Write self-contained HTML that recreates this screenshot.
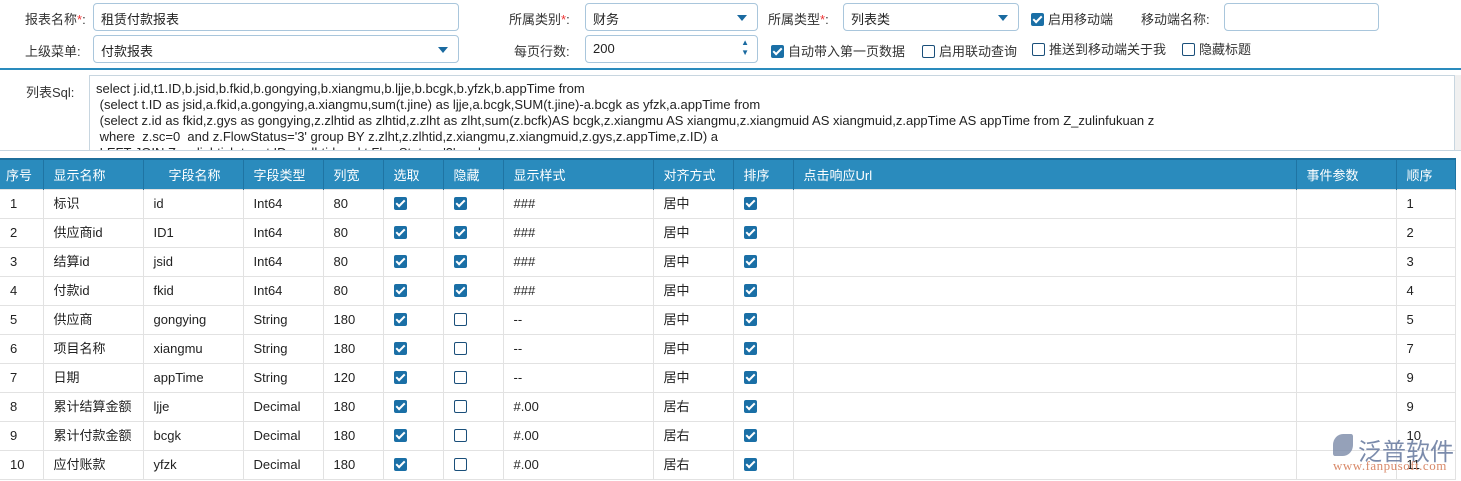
<!DOCTYPE html>
<html><head><meta charset="utf-8"><style>
*{box-sizing:border-box;margin:0;padding:0}
body{width:1461px;height:481px;overflow:hidden;background:#fff;font-family:"Liberation Sans","Noto Sans CJK SC",sans-serif;font-size:13px;color:#333;position:relative}
.a{position:absolute;white-space:nowrap}
.inp{position:absolute;border:1px solid #a9c6dc;border-radius:4px;background:#fff;height:28px;padding:5px 7px;font-size:13px;color:#222}
.red{color:#e33}
.dd::after{content:"";position:absolute;right:10px;top:11px;border-left:5px solid transparent;border-right:5px solid transparent;border-top:6px solid #1a6aa0}
.cb{display:inline-block;width:13px;height:13px;border-radius:2px;vertical-align:-2px;margin-right:4px}
.on{background:#1a6fa6;position:relative}
.on::after{content:"";position:absolute;left:4px;top:1px;width:3px;height:7px;border:solid #fff;border-width:0 2px 2px 0;transform:rotate(45deg)}
.off{border:1.5px solid #1a4f7a;background:#fff}
table{position:absolute;left:0;top:158px;border-collapse:collapse;width:1455px;table-layout:fixed}
th{background:#2a8bbd;color:#fff;font-weight:normal;text-align:left;height:30px;padding-left:10px;border-right:1px solid #1f74a3;border-top:2px solid #1d6f9c;font-size:13px}
td{height:29px;border:1px solid #e2e2e2;padding-left:10px;font-size:13px;color:#222;line-height:14px}
td:first-child{border-left:none}
td .cb{margin:0}
</style></head><body>
<div class="a" style="left:25px;top:9px">报表名称<span class="red">*</span>:</div>
<div class="inp" style="left:93px;top:3px;width:366px">租赁付款报表</div>
<div class="a" style="left:509px;top:9px">所属类别<span class="red">*</span>:</div>
<div class="inp dd" style="left:585px;top:3px;width:173px">财务</div>
<div class="a" style="left:768px;top:9px">所属类型<span class="red">*</span>:</div>
<div class="inp dd" style="left:843px;top:3px;width:176px">列表类</div>
<div class="a" style="left:1031px;top:9px"><span class="cb on"></span>启用移动端</div>
<div class="a" style="left:1141px;top:9px">移动端名称:</div>
<div class="inp" style="left:1224px;top:3px;width:155px"></div>
<div class="a" style="left:25px;top:41px">上级菜单:</div>
<div class="inp dd" style="left:93px;top:35px;width:366px">付款报表</div>
<div class="a" style="left:514px;top:41px">每页行数:</div>
<div class="inp" style="left:585px;top:35px;width:173px">200<span style="position:absolute;right:8px;top:2px;font-size:8px;color:#1a6aa0;line-height:10px">▲<br>▼</span></div>
<div class="a" style="left:771px;top:41px"><span class="cb on"></span>自动带入第一页数据</div>
<div class="a" style="left:922px;top:41px"><span class="cb off"></span>启用联动查询</div>
<div class="a" style="left:1032px;top:39px"><span class="cb off"></span>推送到移动端关于我</div>
<div class="a" style="left:1182px;top:39px"><span class="cb off"></span>隐藏标题</div>
<div style="position:absolute;left:0;top:68px;width:1461px;height:2px;background:#2a8bbd"></div>
<div class="a" style="left:26px;top:82px">列表Sql:</div>
<div style="position:absolute;left:89px;top:75px;width:1366px;height:75px;border:1px solid #c8d6e0;border-bottom:none;overflow:hidden;padding:5px 6px;font-size:13px;line-height:16px;color:#222;white-space:pre">select j.id,t1.ID,b.jsid,b.fkid,b.gongying,b.xiangmu,b.ljje,b.bcgk,b.yfzk,b.appTime from
 (select t.ID as jsid,a.fkid,a.gongying,a.xiangmu,sum(t.jine) as ljje,a.bcgk,SUM(t.jine)-a.bcgk as yfzk,a.appTime from
 (select z.id as fkid,z.gys as gongying,z.zlhtid as zlhtid,z.zlht as zlht,sum(z.bcfk)AS bcgk,z.xiangmu AS xiangmu,z.xiangmuid AS xiangmuid,z.appTime AS appTime from Z_zulinfukuan z
 where  z.sc=0  and z.FlowStatus='3' group BY z.zlht,z.zlhtid,z.xiangmu,z.xiangmuid,z.gys,z.appTime,z.ID) a
 LEFT JOIN Z_zulinhtjsb t on t.ID=a.zlhtid and t.FlowStatus='3' and ...</div>
<div style="position:absolute;left:1455px;top:75px;width:6px;height:75px;background:#f0f0f0"></div>
<div style="position:absolute;left:0;top:150px;width:1461px;height:1px;background:#c8d6e0"></div>
<table>
<colgroup><col style="width:43px"><col style="width:100px"><col style="width:100px"><col style="width:80px"><col style="width:60px"><col style="width:60px"><col style="width:60px"><col style="width:150px"><col style="width:80px"><col style="width:60px"><col style="width:503px"><col style="width:100px"><col style="width:59px"></colgroup>
<tr><th style="padding-left:6px">序号</th><th>显示名称</th><th style="padding-left:25px">字段名称</th><th>字段类型</th><th>列宽</th><th>选取</th><th>隐藏</th><th>显示样式</th><th>对齐方式</th><th>排序</th><th>点击响应Url</th><th>事件参数</th><th>顺序</th></tr>
<tr><td>1</td><td>标识</td><td>id</td><td>Int64</td><td>80</td><td><span class="cb on"></span></td><td><span class="cb on"></span></td><td>###</td><td>居中</td><td><span class="cb on"></span></td><td></td><td></td><td>1</td></tr>
<tr><td>2</td><td>供应商id</td><td>ID1</td><td>Int64</td><td>80</td><td><span class="cb on"></span></td><td><span class="cb on"></span></td><td>###</td><td>居中</td><td><span class="cb on"></span></td><td></td><td></td><td>2</td></tr>
<tr><td>3</td><td>结算id</td><td>jsid</td><td>Int64</td><td>80</td><td><span class="cb on"></span></td><td><span class="cb on"></span></td><td>###</td><td>居中</td><td><span class="cb on"></span></td><td></td><td></td><td>3</td></tr>
<tr><td>4</td><td>付款id</td><td>fkid</td><td>Int64</td><td>80</td><td><span class="cb on"></span></td><td><span class="cb on"></span></td><td>###</td><td>居中</td><td><span class="cb on"></span></td><td></td><td></td><td>4</td></tr>
<tr><td>5</td><td>供应商</td><td>gongying</td><td>String</td><td>180</td><td><span class="cb on"></span></td><td><span class="cb off"></span></td><td>--</td><td>居中</td><td><span class="cb on"></span></td><td></td><td></td><td>5</td></tr>
<tr><td>6</td><td>项目名称</td><td>xiangmu</td><td>String</td><td>180</td><td><span class="cb on"></span></td><td><span class="cb off"></span></td><td>--</td><td>居中</td><td><span class="cb on"></span></td><td></td><td></td><td>7</td></tr>
<tr><td>7</td><td>日期</td><td>appTime</td><td>String</td><td>120</td><td><span class="cb on"></span></td><td><span class="cb off"></span></td><td>--</td><td>居中</td><td><span class="cb on"></span></td><td></td><td></td><td>9</td></tr>
<tr><td>8</td><td>累计结算金额</td><td>ljje</td><td>Decimal</td><td>180</td><td><span class="cb on"></span></td><td><span class="cb off"></span></td><td>#.00</td><td>居右</td><td><span class="cb on"></span></td><td></td><td></td><td>9</td></tr>
<tr><td>9</td><td>累计付款金额</td><td>bcgk</td><td>Decimal</td><td>180</td><td><span class="cb on"></span></td><td><span class="cb off"></span></td><td>#.00</td><td>居右</td><td><span class="cb on"></span></td><td></td><td></td><td>10</td></tr>
<tr><td>10</td><td>应付账款</td><td>yfzk</td><td>Decimal</td><td>180</td><td><span class="cb on"></span></td><td><span class="cb off"></span></td><td>#.00</td><td>居右</td><td><span class="cb on"></span></td><td></td><td></td><td>11</td></tr>
</table>
<div class="a" style="left:1333px;top:434px;width:20px;height:22px;border-radius:50% 10% 50% 10%;background:#7b8aa8;opacity:.8"></div>
<div class="a" style="left:1358px;top:432px;font-size:24px;color:#6d7fa3;opacity:.9">泛普软件</div>
<div class="a" style="left:1333px;top:458px;font-size:13px;color:#d98a6a;font-family:'Liberation Serif',serif;letter-spacing:.5px">www.fanpusoft.com</div>
</body></html>
